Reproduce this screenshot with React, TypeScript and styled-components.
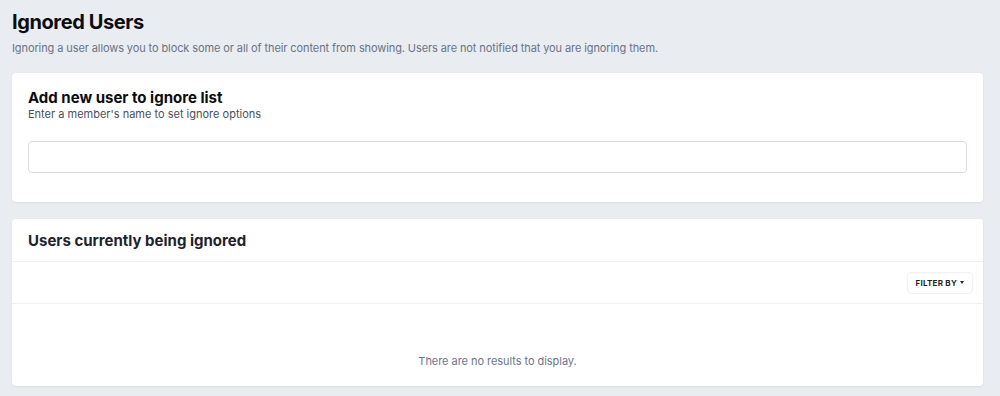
import React from 'react';
import styled, { createGlobalStyle } from 'styled-components';

const GlobalStyle = createGlobalStyle`
    html, body {
        margin: 0;
        padding: 0;
        background: #e9ecf1;
        font-family: Inter, 'Liberation Sans', sans-serif;
    }
`;

const Page = styled.div`
    padding: 8px 17px 10px 12px;
    display: flex;
    flex-direction: column;
`;

const PageTitle = styled.h1`
    margin: 0;
    font-size: 20px;
    line-height: 28px;
    font-weight: 700;
    color: #0c0d10;
    letter-spacing: -0.4px;
`;

const PageDescription = styled.p`
    margin: 4px 0 0;
    font-size: 11px;
    line-height: 16px;
    letter-spacing: -0.1px;
    color: #6b7387;
`;

const Card = styled.section<{ $top: number }>`
    margin-top: ${(p) => p.$top}px;
    background: #fff;
    border-radius: 4px;
    box-shadow: 0 1px 2px rgba(30, 40, 60, 0.08);
`;

const CardBody = styled.div`
    padding: 16px 16px 29px;
`;

const CardTitle = styled.h2`
    margin: 0;
    font-size: 15px;
    line-height: 18px;
    font-weight: 700;
    color: #0c0d10;
`;

const CardHint = styled.div`
    font-size: 11px;
    line-height: 14px;
    color: #4a4f5c;
`;

const TextInput = styled.input`
    display: block;
    box-sizing: border-box;
    width: 100%;
    height: 32px;
    margin-top: 20px;
    border: 1px solid #d9dce3;
    border-radius: 4px;
    outline: none;
    font: inherit;
`;

const CardHeader = styled.div`
    height: 42px;
    padding: 0 16px;
    display: flex;
    align-items: center;
    border-bottom: 1px solid #edeff3;
`;

const HeaderTitle = styled.h2`
    margin: 0;
    font-size: 15px;
    font-weight: 700;
    color: #1f232d;
`;

const FilterBar = styled.div`
    height: 41px;
    padding: 0 10px;
    display: flex;
    align-items: center;
    justify-content: flex-end;
    border-bottom: 1px solid #edeff3;
`;

const FilterButton = styled.button`
    height: 22px;
    padding: 0 8px;
    display: flex;
    align-items: center;
    gap: 3px;
    background: #fff;
    border: 1px solid #eef0f3;
    border-radius: 4px;
    font-family: inherit;
    font-size: 8px;
    font-weight: 700;
    letter-spacing: 0.25px;
    color: #1f232d;
`;

const Caret = styled.span`
    width: 0;
    height: 0;
    border-left: 2.5px solid transparent;
    border-right: 2.5px solid transparent;
    border-top: 3px solid #1f232d;
`;

const EmptyState = styled.div`
    height: 82px;
    display: flex;
    align-items: flex-end;
    justify-content: center;
    padding-bottom: 18px;
    box-sizing: border-box;
    font-size: 11px;
    letter-spacing: -0.05px;
    color: #6b7590;
`;

const App = () => {
    return (
        <>
            <GlobalStyle />
            <Page>
                <PageTitle>Ignored Users</PageTitle>
                <PageDescription>
                    Ignoring a user allows you to block some or all of their
                    content from showing. Users are not notified that you are
                    ignoring them.
                </PageDescription>

                <Card $top={17}>
                    <CardBody>
                        <CardTitle>Add new user to ignore list</CardTitle>
                        <CardHint>
                            Enter a member&apos;s name to set ignore options
                        </CardHint>
                        <TextInput type="text" />
                    </CardBody>
                </Card>

                <Card $top={17}>
                    <CardHeader>
                        <HeaderTitle>Users currently being ignored</HeaderTitle>
                    </CardHeader>
                    <FilterBar>
                        <FilterButton>
                            FILTER BY <Caret />
                        </FilterButton>
                    </FilterBar>
                    <EmptyState>There are no results to display.</EmptyState>
                </Card>
            </Page>
        </>
    );
};

export default App;
